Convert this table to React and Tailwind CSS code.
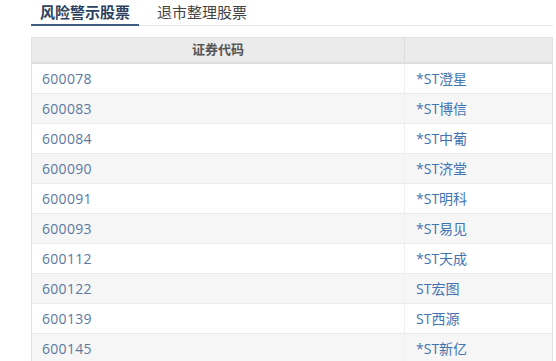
import React from "react";

const rows = [
  ["600078", "*ST澄星"],
  ["600083", "*ST博信"],
  ["600084", "*ST中葡"],
  ["600090", "*ST济堂"],
  ["600091", "*ST明科"],
  ["600093", "*ST易见"],
  ["600112", "*ST天成"],
  ["600122", "ST宏图"],
  ["600139", "ST西源"],
  ["600145", "*ST新亿"],
];

export default function App() {
  return (
    <div
      className="w-[556px] h-[361px] overflow-hidden bg-white pl-[31px] pr-[3px]"
      style={{ fontFamily: '"Open Sans", "Noto Sans CJK SC", sans-serif' }}
    >
      <div className="flex h-[26px] border-b border-[#e6e6e6]">
        <div className="h-[26px] -mb-px px-[9px] border-b-2 border-[#3f5b80] text-[15px] leading-[24px] font-semibold text-[#2c4260]">
          风险警示股票
        </div>
        <div className="ml-[9px] px-[9px] text-[15px] leading-[24px] text-[#444]">
          退市整理股票
        </div>
      </div>
      <div className="mt-[11px] border-x border-t border-[#e2e2e2]">
        <div className="flex h-[26px] bg-[#ebebeb] border-b-2 border-[#dedede] text-[13px] font-semibold text-[#555]">
          <div className="w-[373px] flex items-center justify-center border-r border-[#dcdcdc]">证券代码</div>
          <div className="flex-1" />
        </div>
        {rows.map(([code, name], i) => (
          <div
            key={code}
            className={`flex h-[30px] border-b border-[#ebebeb] text-[14px] ${i % 2 === 1 ? "bg-[#f6f6f6]" : "bg-white"}`}
          >
            <div className="w-[373px] flex items-center pl-[10px] border-r border-[#f0f0f0] text-[#5a78a2] tracking-[0.3px]">{code}</div>
            <div className="flex-1 flex items-center pl-[11px] text-[#4174b2]">{name}</div>
          </div>
        ))}
      </div>
    </div>
  );
}
